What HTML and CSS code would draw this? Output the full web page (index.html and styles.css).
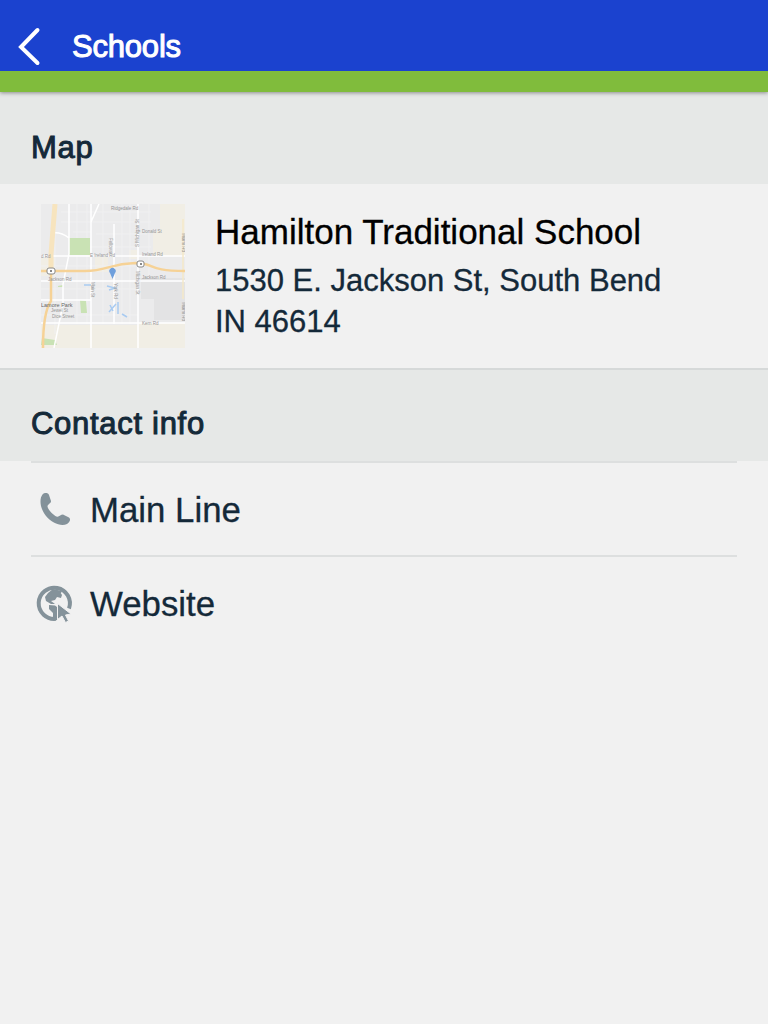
FILE: index.html
```html
<!DOCTYPE html>
<html lang="en">
<head>
<meta charset="UTF-8">
<meta name="viewport" content="width=device-width, initial-scale=1.0">
<title>Schools</title>
<link rel="stylesheet" href="styles.css">
</head>
<body>
<header class="topbar">
  <svg class="back" viewBox="0 0 24 40"><path d="M20.500 3L4 20L20.500 36"/></svg>
  <h1>Schools</h1>
</header>
<main>
  <h2 class="section-title">Map</h2>
  <div class="school">
    <svg class="map" viewBox="0 0 144 144">
      <rect width="144" height="144" fill="#ebebec"/>
      <path fill="#f1eee5" d="M119 0h25v52h-32V27h7zM0 121h98v23H0zM98 119h46v25H98zM0 54h14v18H0zM54 53h13v15H54zM88 46h8v9h-8z"/>
      <path fill="#e3e3e4" d="M100 74h44v42h-31V95h-13z"/>
      <path stroke="#f0f0f1" fill="none" d="M20 8h90M20 18h90M30 43h80M32 28h18M55 30h51M0 62h100M0 85h98M0 111h97M14 0v130M36 0v120M46 0v120M62 0v120M81 0v120M89 0v120M108 0v74"/>
      <path fill="#c9e2b4" d="M28 34h21v17H28zM39 96l6 1 1 12h-6zM1 134l13 2 2 5H0zM17 82l5-1v2h-5z"/>
      <path stroke="#fff" stroke-width="1.5" fill="none" d="M28 0v50L22 80V100L13 144M50 0v144M97 0v144M73 20v100M0 52h144M0 77h144M0 96h50M0 119h144M12 29q8-1 16 5M58 0l-8 18"/>
      <path stroke="#f7e4be" stroke-width="5" fill="none" d="M14 0L10 50V66"/>
      <path stroke="#f5e8c8" stroke-width="1.5" fill="none" d="M142 15v80"/>
      <path stroke="#f6d296" stroke-width="2.5" fill="none" d="M10 66V97Q2 108 2 144M0 67H44C66 67 68 60 94 59C115 59 105 67 144 67"/>
      <path stroke="#a9cbf1" stroke-width="1.5" fill="none" d="M66 82l8 2-6 2M68 108l7-8M77 98v12M81 110l5 3M69 101l3 6M43 81h7"/>
      <g fill="#fff" stroke="#888"><rect x="6" y="64" width="8" height="6" rx="2"/><rect x="96" y="57" width="7" height="6" rx="2"/></g>
      <g fill="#888"><rect x="9" y="66" width="2" height="2"/><rect x="99" y="59" width="2" height="2"/></g>
      <path fill="#6f9fdc" d="M71.500 75L69 69a3.200 3.200 0 1 1 5 0z"/>
      <g class="labels">
        <text x="70" y="6">Ridgedale Rd</text>
        <text x="101" y="29">Donald St</text>
        <text x="49" y="53">E Ireland Rd</text>
        <text x="101" y="52">Ireland Rd</text>
        <text x="0" y="54">d Rd</text>
        <text x="7" y="77">Jackson Rd</text>
        <text x="101" y="75">Jackson Rd</text>
        <text x="101" y="121">Kern Rd</text>
        <text x="10" y="108">Jewel St</text>
        <text x="11" y="114">Dice Street</text>
        <text class="area" x="0" y="103">Lamore Park</text>
        <text transform="translate(68 34) rotate(90)">Fellows</text>
        <text transform="translate(98 43) rotate(-90)">S Michigan St</text>
        <text transform="translate(141 29) rotate(90)">Miami Rd</text>
        <text transform="translate(50 78) rotate(90)">Main St</text>
        <text transform="translate(73 79) rotate(90)">York Rd</text>
        <text transform="translate(95 67) rotate(90)">Michigan St</text>
        <text transform="translate(141 98) rotate(90)">Miami Rd</text>
      </g>
    </svg>
    <div class="details">
      <div class="name">Hamilton Traditional School</div>
      <div class="address">1530 E. Jackson St, South Bend<br>IN 46614</div>
    </div>
  </div>
  <h2 class="section-title contact">Contact info</h2>
  <ul class="contacts">
    <li>
      <svg class="icon" viewBox="0 0 40 40"><path d="M7.500 4.500C9.500 2.500 13 2.500 14 5L16 11C16.200 13.500 12.500 14 12.500 16.500C13 19.500 18 25 21.500 26.500C24 27.500 25.500 24.500 28 24.500L34 27.500C36 29 35 32 32 34C26 37 17 33 11 26C5 18.500 4 9 7.500 4.500Z"/></svg>
      <span>Main Line</span>
    </li>
    <li>
      <svg class="icon" viewBox="0 0 40 40">
        <path class="ring" d="M21 34.800A15.600 15.600 0 1 1 34 24.500"/>
        <path d="M13 9L18 5L27 7L25 11L22 13L20 16L16 17L20 20L16 20L11 17L10 13ZM14 21L20 21.500L22 23V36L18 36V29L14 25ZM25 8L27 11L26 14L22 13Z"/>
        <path class="cursor" d="M22.500 19.500V35.500L27 32L30.500 38.500L33.500 37L30.500 31L36 30Z"/>
      </svg>
      <span>Website</span>
    </li>
  </ul>
</main>
</body>
</html>
```
FILE: styles.css
```css
* {
  box-sizing: border-box;
}
body {
  margin: 0;
  min-height: 1024px;
  background-color: #f1f1f1;
  color: #142939;
  font-family: "Liberation Sans", Arial, sans-serif;
}
h1, h2, ul {
  margin: 0;
  padding: 0;
  font-weight: 400;
}
.topbar {
  position: relative;
  display: flex;
  align-items: center;
  height: 92px;
  padding: 23px 17px 0;
  border-bottom: 21px solid #80bc3c;
  background-color: #1b42cf;
  box-shadow: 0 1px 4px rgba(0, 0, 0, 0.4);
  color: #fff;
}
.back {
  width: 24px;
  height: 40px;
  margin-right: 31px;
  fill: none;
  stroke: #fff;
  stroke-width: 4;
  stroke-linecap: round;
}
h1 {
  font-size: 31px;
  line-height: 40px;
  letter-spacing: -0.2px;
  -webkit-text-stroke: 1px #fff;
}
.section-title {
  height: 92px;
  padding: 38px 31px 0;
  background-color: #e6e8e7;
  font-size: 31px;
  line-height: 35px;
  letter-spacing: 0.7px;
  -webkit-text-stroke: 1px #142939;
}
.section-title.contact {
  height: 93px;
  border-top: 2px solid #d6d9d9;
  padding-top: 36px;
}
.school {
  display: flex;
  height: 184px;
  padding: 20px 41px 0;
}
.map {
  width: 144px;
  height: 144px;
}
.labels {
  font-size: 4.5px;
  fill: #949494;
}
.labels .area {
  font-size: 5.5px;
  fill: #666;
}
.details {
  margin-left: 30px;
  padding-top: 7px;
}
.name {
  color: #000;
  font-size: 35px;
  line-height: 42px;
  -webkit-text-stroke: 0.3px #000;
}
.address {
  margin-top: 7px;
  font-size: 31px;
  line-height: 41px;
  -webkit-text-stroke: 0.3px #142939;
}
.contacts {
  margin: 0 31px;
  list-style: none;
}
.contacts li {
  display: flex;
  align-items: center;
  height: 94px;
  border-top: 2px solid #dddfdf;
  padding: 2px 4px 0;
  font-size: 34.8px;
  -webkit-text-stroke: 0.3px #142939;
}
.icon {
  width: 40px;
  height: 40px;
  margin-right: 15px;
  fill: #84929a;
}
.icon .ring {
  fill: none;
  stroke: #84929a;
  stroke-width: 4;
}
.icon .cursor {
  stroke: #f1f1f1;
  stroke-width: 1;
}
```
